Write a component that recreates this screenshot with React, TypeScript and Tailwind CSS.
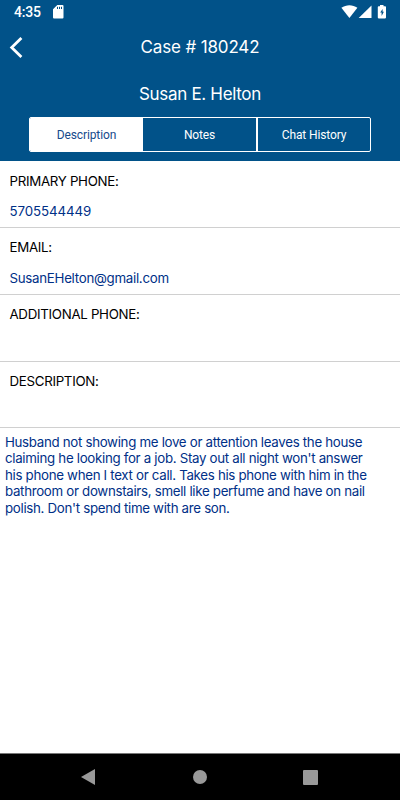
import type { ReactNode } from "react";

interface Field {
  label: string;
  value?: string;
  rowClass: string;
  valueClass?: string;
}

const FIELDS: Field[] = [
  {
    label: "PRIMARY PHONE:",
    value: "5705544449",
    rowClass: "h-[67px] pt-[11px]",
    valueClass: "mt-[12px] tracking-[-0.08px]",
  },
  {
    label: "EMAIL:",
    value: "SusanEHelton@gmail.com",
    rowClass: "h-[67px] pt-[10px]",
    valueClass: "mt-[13px] tracking-[-0.28px]",
  },
  { label: "ADDITIONAL PHONE:", rowClass: "h-[67px] pt-[10px]" },
  { label: "DESCRIPTION:", rowClass: "h-[66px] pt-[10px]" },
];

const DESCRIPTION = [
  "Husband not showing me love or attention leaves the house",
  "claiming he looking for a job. Stay out all night won't answer",
  "his phone when I text or call. Takes his phone with him in the",
  "bathroom or downstairs, smell like perfume and have on nail",
  "polish. Don't spend time with are son.",
];

export default function App() {
  return (
    <div className="flex h-[800px] w-[400px] flex-col overflow-hidden bg-white font-['Inter',sans-serif]">
      <header className="flex h-[161px] shrink-0 flex-col bg-[#015289] text-white">
        <StatusBar />
        <div className="grid h-[46px] grid-cols-[40px_1fr_40px] items-center">
          <button aria-label="Back" className="pl-[9px]">
            <svg width="16" height="22" viewBox="0 0 16 22" fill="none" stroke="#fff" strokeWidth="2.8">
              <path d="M12.4 2 2.7 11.6l9.7 9.4" />
            </svg>
          </button>
          <h1 className="text-center text-[17px] leading-[22px] tracking-[-0.15px] whitespace-nowrap">
            Case # 180242
          </h1>
        </div>
        <h2 className="mt-[13px] text-center text-[17px] leading-[22px] tracking-[-0.32px]">
          Susan E. Helton
        </h2>
        <nav className="mt-[12px] ml-[29px] grid h-[35px] w-[342px] grid-cols-[113px_115px_1fr] overflow-hidden rounded-[2px] border border-white font-['Roboto',sans-serif] text-[12px] tracking-[-0.13px]">
          <Tab active>Description</Tab>
          <Tab>Notes</Tab>
          <Tab>Chat History</Tab>
        </nav>
      </header>

      <main className="grow">
        {FIELDS.map((field) => (
          <section key={field.label} className={`border-b border-[#d0d0d0] px-[9.5px] ${field.rowClass}`}>
            <div className="text-[13.3px] leading-[18px] tracking-[-0.3px] text-black">{field.label}</div>
            {field.value && (
              <div className={`text-[13.3px] leading-[18px] text-[#003087] ${field.valueClass}`}>
                {field.value}
              </div>
            )}
          </section>
        ))}
        <p className="pt-[5.6px] pl-[5px] text-[13.3px] leading-[16.5px] tracking-[-0.31px] whitespace-nowrap text-[#003087]">
          {DESCRIPTION.map((line) => (
            <span key={line} className="block">
              {line}
            </span>
          ))}
        </p>
      </main>

      <NavBar />
    </div>
  );
}

function StatusBar() {
  return (
    <div className="flex h-[24px] items-center pr-[13px] pl-[14px]">
      <span className="w-[27px] font-['Roboto',sans-serif] text-[14px] leading-[16px] font-medium tracking-[-0.2px]">
        4:35
      </span>
      <svg className="ml-[12px]" width="11" height="14" viewBox="0 0 11 14" fill="#fff">
        <path d="M4.3.1H9.5a1 1 0 0 1 1 1v11.4a1 1 0 0 1-1 1h-8.5a1 1 0 0 1-1-1V4.3z" />
        <path d="M4.5 1.8v2.2M6.5 1.8v2.2M8.5 1.8v2.2" stroke="#015289" strokeWidth="1" />
      </svg>
      <svg className="ml-auto" width="46" height="14" viewBox="0 0 46 14" fill="#fff">
        <path d="M.4 2.8C5.2-.7 11.6-.7 16.4 2.8L8.4 12.9z" />
        <path d="M30.5.5v12.6H17.7z" />
        <path d="M39 1.3V.1h3.5v1.2h1.7c.5 0 .8.3.8.8v10.5c0 .5-.3.8-.8.8h-6.6c-.5 0-.8-.3-.8-.8V2.1c0-.5.3-.8.8-.8z" />
        <path d="M41.6 3.9 39.2 7.6h1.4v3.3l2.3-4.1h-1.3z" fill="#015289" />
      </svg>
    </div>
  );
}

function Tab({ active, children }: { active?: boolean; children: ReactNode }) {
  return (
    <button
      className={`flex items-center justify-center ${
        active ? "bg-white text-[#164a8c]" : "border-r-2 border-white text-white last:border-r-0"
      }`}
    >
      {children}
    </button>
  );
}

function NavBar() {
  return (
    <footer className="flex h-[47px] shrink-0 items-center border-t border-[#777] bg-black pl-[81px]">
      <svg width="14" height="16" viewBox="0 0 14 16" fill="#999">
        <path d="M14 0v16L0 8z" />
      </svg>
      <div className="ml-[98px] h-[14px] w-[14px] rounded-full bg-[#999]" />
      <div className="ml-[96px] h-[15px] w-[15px] rounded-[1px] bg-[#999]" />
    </footer>
  );
}
